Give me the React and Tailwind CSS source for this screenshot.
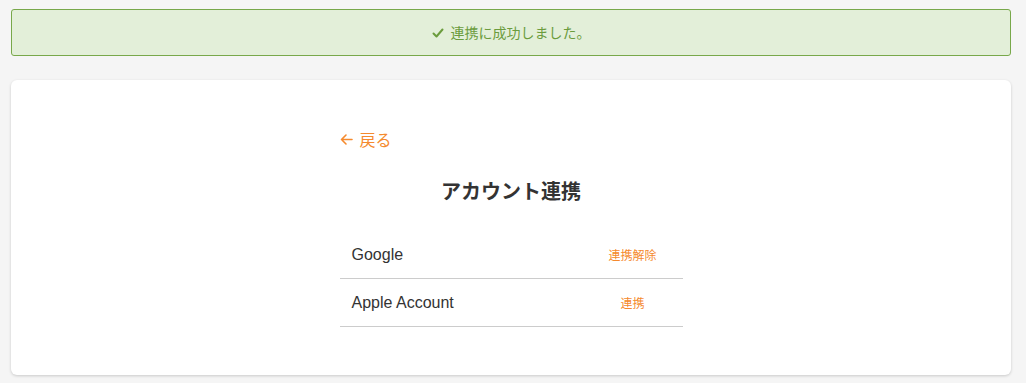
import React from "react";

const jp = { fontFamily: '"Noto Sans CJK JP", "Noto Sans", sans-serif' };

export default function App() {
  return (
    <div
      className="min-h-screen bg-[#f5f5f5] pt-[9px] pl-[11px] pr-[15px]"
      style={{ fontFamily: '"Liberation Sans", "Noto Sans CJK JP", sans-serif' }}
    >
      <div className="h-[47px] border border-[#78a84a] rounded-[3px] bg-[#e3efd9] flex items-center justify-center gap-[7px] text-[14px] text-[#6b9c3d]" style={jp}>
        <svg width="12" height="12" viewBox="0 0 12 12" fill="none" stroke="#6b9c3d" strokeWidth="2" strokeLinecap="round" strokeLinejoin="round">
          <path d="M1.5 6.5 L4.5 9.5 L10.5 2.5" />
        </svg>
        <span>連携に成功しました。</span>
      </div>

      <div className="mt-[24px] bg-white rounded-[6px] shadow-[0_1px_3px_rgba(0,0,0,0.18)] pt-[47px] pb-[48px]">
        <div className="w-[343px] mx-auto">
          <a className="h-[24px] flex items-center gap-[7px] text-[16px] text-[#f58a2e]" style={jp}>
            <svg width="13" height="13" viewBox="0 0 13 13" fill="none" stroke="#f58a2e" strokeWidth="1.6" strokeLinecap="round" strokeLinejoin="round">
              <path d="M12 6.5 H1.5 M6 2 L1.5 6.5 L6 11" />
            </svg>
            <span>戻る</span>
          </a>
          <h1 className="mt-[25px] text-center text-[20px] leading-[30px] font-bold text-[#333333]" style={jp}>
            アカウント連携
          </h1>
          <div className="mt-[25px]">
            <div className="h-[48px] flex items-center border-b border-[#cccccc]">
              <div className="flex-1 pl-[12px] text-[16px] text-[#333333]">Google</div>
              <div className="w-[100px] text-center text-[12px] text-[#f58a2e]" style={jp}>連携解除</div>
            </div>
            <div className="h-[48px] flex items-center border-b border-[#cccccc]">
              <div className="flex-1 pl-[12px] text-[16px] text-[#333333]">Apple Account</div>
              <div className="w-[100px] text-center text-[12px] text-[#f58a2e]" style={jp}>連携</div>
            </div>
          </div>
        </div>
      </div>
    </div>
  );
}
